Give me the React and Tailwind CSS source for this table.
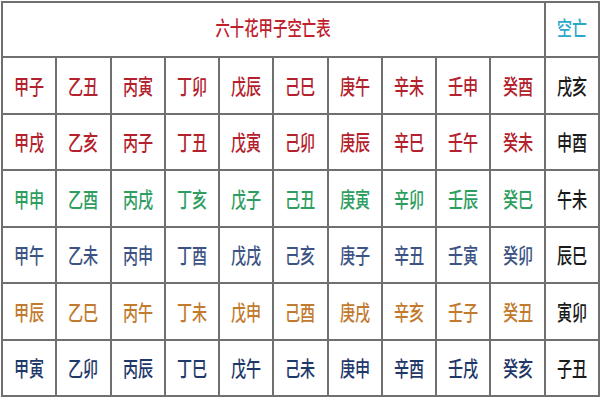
import React from "react";

const rows = [
  { color: "text-[#b3212c]", cells: ["甲子","乙丑","丙寅","丁卯","戊辰","己巳","庚午","辛未","壬申","癸酉"], kw: "戌亥" },
  { color: "text-[#b3212c]", cells: ["甲戌","乙亥","丙子","丁丑","戊寅","己卯","庚辰","辛巳","壬午","癸未"], kw: "申酉" },
  { color: "text-[#2e9d60]", cells: ["甲申","乙酉","丙戌","丁亥","戊子","己丑","庚寅","辛卯","壬辰","癸巳"], kw: "午未" },
  { color: "text-[#3d5384]", cells: ["甲午","乙未","丙申","丁酉","戊戌","己亥","庚子","辛丑","壬寅","癸卯"], kw: "辰巳" },
  { color: "text-[#c27a2e]", cells: ["甲辰","乙巳","丙午","丁未","戊申","己酉","庚戌","辛亥","壬子","癸丑"], kw: "寅卯" },
  { color: "text-[#1f386a]", cells: ["甲寅","乙卯","丙辰","丁巳","戊午","己未","庚申","辛酉","壬戌","癸亥"], kw: "子丑" },
];

function Cell({ text, color }) {
  return (
    <div className="flex items-center justify-center border-r-2 border-b-2 border-[#707070]">
      <span className={`inline-block text-[21px] leading-none font-medium scale-x-[0.72] whitespace-nowrap ${color}`}>{text}</span>
    </div>
  );
}

export default function App() {
  return (
    <div className="w-[600px] h-[400px] bg-white pt-[1px] pl-[1px]" style={{ fontFamily: '"Noto Sans CJK SC", "Noto Sans", sans-serif' }}>
      <div className="w-[599px] h-[396px] grid grid-cols-11 grid-rows-[55px_repeat(6,1fr)] border-l-2 border-t-2 border-[#707070]">
        <div className="col-span-10 flex items-center justify-center border-r-2 border-b-2 border-[#707070] pb-[3px]">
          <span className="inline-block text-[20px] leading-none font-medium scale-x-[0.72] whitespace-nowrap text-[#c0202c]">六十花甲子空亡表</span>
        </div>
        <div className="flex items-center justify-center border-r-2 border-b-2 border-[#707070] pb-[3px]">
          <span className="inline-block text-[20px] leading-none font-medium scale-x-[0.75] whitespace-nowrap text-[#2aa8c8]">空亡</span>
        </div>
        {rows.map((r, i) => (
          <React.Fragment key={i}>
            {r.cells.map((c) => (
              <Cell key={c} text={c} color={r.color} />
            ))}
            <Cell text={r.kw} color="text-[#1a1a1a]" />
          </React.Fragment>
        ))}
      </div>
    </div>
  );
}
